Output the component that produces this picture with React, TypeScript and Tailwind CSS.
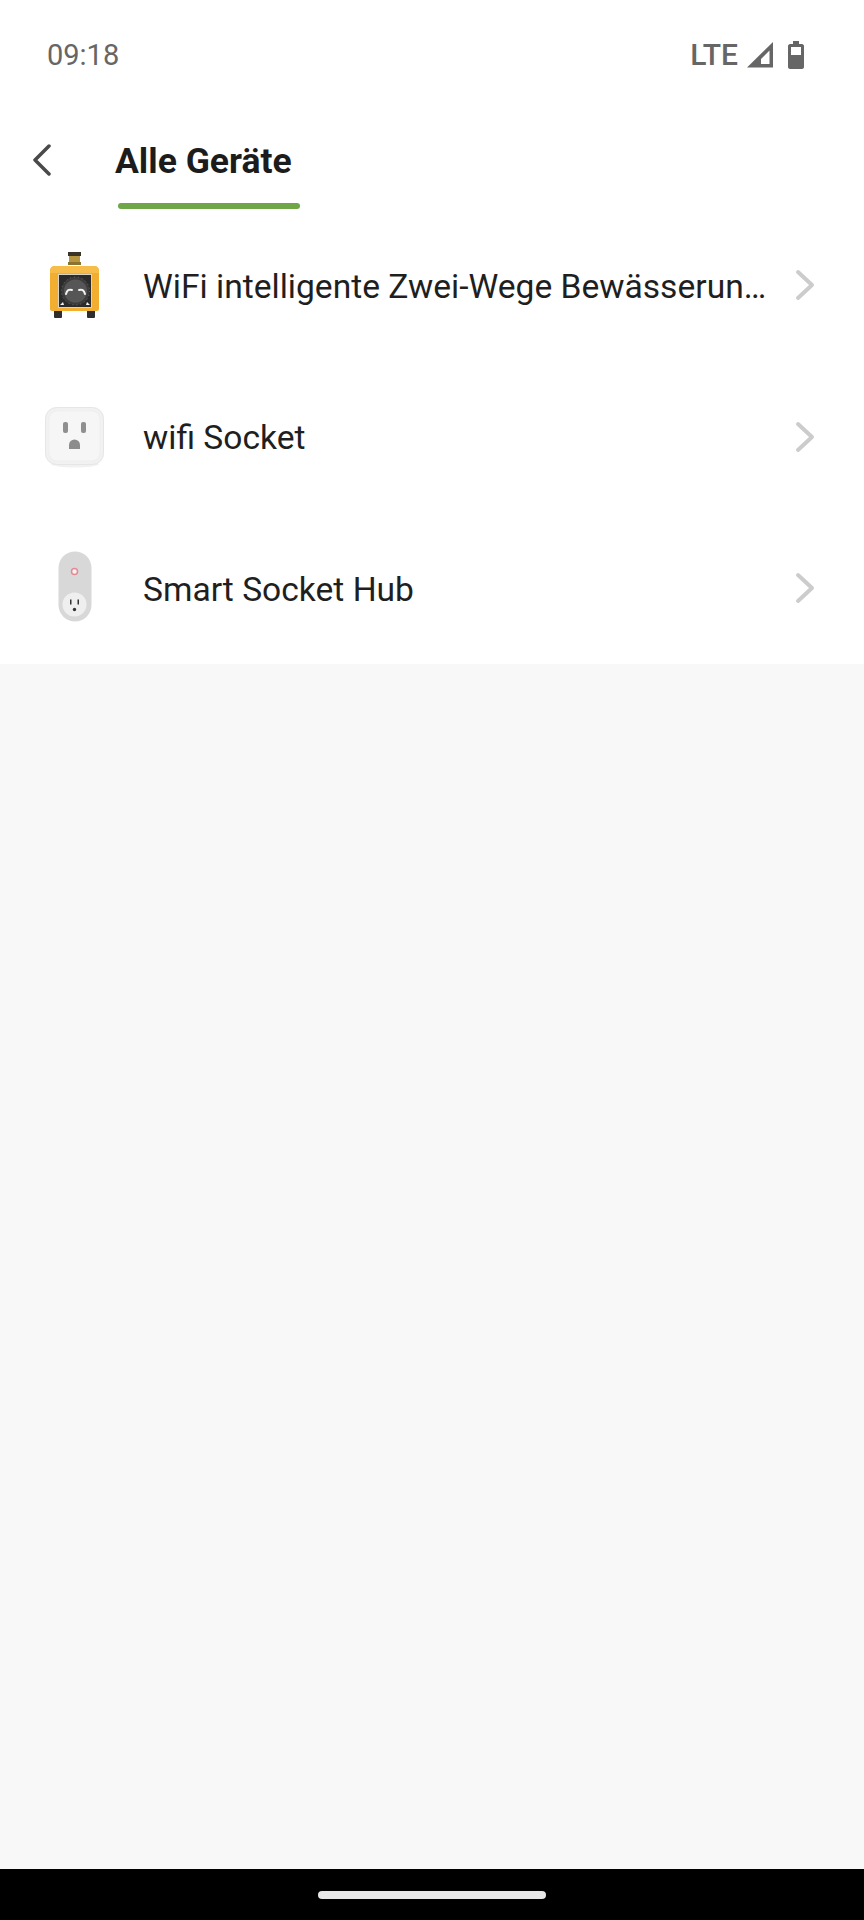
import React from 'react';

const TimerIcon = () => (
  <svg width="52" height="68" viewBox="0 0 52 68">
    <rect x="19" y="1" width="13" height="4" fill="#3a3426" />
    <rect x="20" y="5" width="11" height="6" fill="#b8963f" />
    <rect x="19" y="11" width="13" height="3" fill="#8a7230" />
    <rect x="5" y="59" width="8" height="8" rx="1" fill="#2e2e2e" />
    <rect x="38" y="59" width="8" height="8" rx="1" fill="#2e2e2e" />
    <path d="M1 20c0-3 2-5 5-5h39c3 0 5 2 5 5v38c0 1-1 2-2 2H3c-1 0-2-1-2-2z" fill="#f2ae30" />
    <path d="M1 20c0-3 2-5 5-5h39c3 0 5 2 5 5v2H1z" fill="#f6bd4a" />
    <rect x="9.500" y="23.500" width="33" height="33" fill="#2b2b2b" stroke="#d8d4c8" strokeWidth="1" />
    <circle cx="26.500" cy="40" r="14" fill="#3c3c3c" stroke="#6a6a6a" strokeWidth="1" strokeDasharray="1 3" />
    <circle cx="26.500" cy="40" r="11.500" fill="#565656" />
    <path d="M17 43c1-4 3-5 6-4M36 43c-1-4-3-5-6-4" fill="none" stroke="#f2f2f2" strokeWidth="2" strokeLinecap="round" />
    <path d="M11 54l3-3 1 3zM41 54l-3-3-1 3z" fill="#f2f2f2" />
  </svg>
);

const PlugIcon = () => (
  <svg width="60" height="62" viewBox="0 0 60 62">
    <ellipse cx="30" cy="58" rx="24" ry="3.500" fill="#f1f1f1" />
    <rect x="0.500" y="1.500" width="58" height="57" rx="11" fill="#f1f1f1" stroke="#e6e6e6" strokeWidth="1" />
    <rect x="4" y="5" width="51" height="50" rx="8" fill="#f6f6f6" stroke="#efefef" strokeWidth="1" />
    <rect x="18" y="16" width="5" height="11" rx="2" fill="#8f8f8f" />
    <rect x="36" y="16" width="5" height="11" rx="2" fill="#8f8f8f" />
    <path d="M24 43v-4a5.500 5.500 0 0 1 11 0v4z" fill="#8c8c8c" />
  </svg>
);

const HubIcon = () => (
  <svg width="34" height="71" viewBox="0 0 34 71" className="mb-[4px]">
    <rect x="0.500" y="0.500" width="33" height="70" rx="16.500" fill="#d8d8d8" />
    <circle cx="16.500" cy="20.500" r="3" fill="#f4f4f4" stroke="#e58a94" strokeWidth="1.500" />
    <circle cx="16.500" cy="53.500" r="12" fill="#efefef" />
    <rect x="12" y="48.500" width="1.500" height="5" fill="#333333" />
    <rect x="19.500" y="48.500" width="1.500" height="5" fill="#333333" />
    <circle cx="16.500" cy="58.500" r="1.700" fill="#333333" />
  </svg>
);

const devices = [
  { name: 'WiFi intelligente Zwei-Wege Bewässerungsuhr', icon: TimerIcon, height: 'h-[152px]' },
  { name: 'wifi Socket', icon: PlugIcon, height: 'h-[151px]' },
  { name: 'Smart Socket Hub', icon: HubIcon, height: 'h-[152px]' },
];

const App: React.FC = () => {
  return (
    <div className="flex flex-col h-[1920px] w-[864px] bg-[#f8f8f8] font-['Roboto',sans-serif]">
      <div className="bg-white">
        <div className="flex items-center justify-between h-[110px] pl-[47px] pr-[60px] text-[#666666]">
          <span className="text-[29px] pt-px">09:18</span>
          <div className="flex items-center">
            <span className="text-[30px] font-medium mr-[9px] pb-[2px]">LTE</span>
            <svg width="27" height="26" viewBox="0 0 27 26" className="mr-[14px]">
              <path d="M0 25.500L26 0v25.500zM14 22h8.500V8.500L14 17z" fill="#666666" fillRule="evenodd" />
            </svg>
            <svg width="16" height="28" viewBox="0 0 16 28">
              <path d="M5 0h6v3h3c1 0 2 1 2 2v21c0 1-1 2-2 2H2c-1 0-2-1-2-2V5c0-1 1-2 2-2h3z" fill="#666666" />
              <rect x="3" y="6" width="10" height="8" fill="#ffffff" />
            </svg>
          </div>
        </div>

        <div className="flex items-center h-[93px] pt-[7px] pl-[31px]">
          <svg width="22" height="32" viewBox="0 0 22 32" fill="none">
            <path d="M18 2L4 16l14 14" stroke="#4a4a4a" strokeWidth="3.500" strokeLinecap="round" strokeLinejoin="round" />
          </svg>
          <h1 className="ml-[62px] pt-[4px] text-[35.500px] font-bold leading-none text-[#1c1c1c]">Alle Geräte</h1>
        </div>
        <div className="ml-[118px] h-[6px] w-[182px] rounded-full bg-[#6fa648]" />

        <div>
          {devices.map((device) => {
            const Icon = device.icon;
            return (
              <div key={device.name} className={`flex items-center pl-[39px] pr-[49px] ${device.height}`}>
                <div className="flex w-[72px] shrink-0 justify-center">
                  <Icon />
                </div>
                <span className="ml-[32px] min-w-0 flex-1 truncate pt-[4px] text-[33.600px] text-[#1f1f1f]">{device.name}</span>
                <svg width="20" height="32" viewBox="0 0 20 32" fill="none" className="ml-[26px] shrink-0">
                  <path d="M3 3l14 13L3 29" stroke="#cccccc" strokeWidth="4" strokeLinecap="round" strokeLinejoin="round" />
                </svg>
              </div>
            );
          })}
        </div>
      </div>

      <div className="flex-1" />

      <div className="flex h-[51px] items-center justify-center bg-black">
        <div className="h-[8px] w-[228px] rounded-full bg-[#e8e8e8]" />
      </div>
    </div>
  );
};

export default App;
